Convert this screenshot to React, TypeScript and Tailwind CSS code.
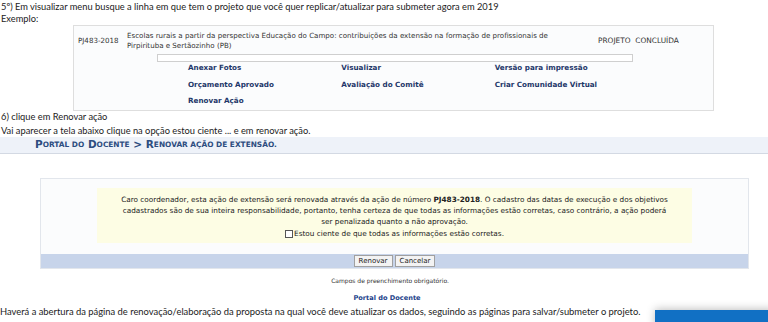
const links = [
  ['Anexar Fotos', 'Visualizar', 'Versão para impressão'],
  ['Orçamento Aprovado', 'Avaliação do Comitê', 'Criar Comunidade Virtual'],
  ['Renovar Ação', '', ''],
]

export default function App() {
  return (
    <div className="relative h-[322px] w-[768px] overflow-hidden bg-white text-[#222] [font-family:Lato,sans-serif]">
      <p className="pl-px pt-px text-[9.3px] leading-[12px]">
        5º) Em visualizar menu busque a linha em que tem o projeto que você quer replicar/atualizar para submeter agora em 2019
      </p>
      <p className="pl-px text-[9.3px] leading-[12px]">Exemplo:</p>

      {/* exemplo da linha do projeto */}
      <div className="ml-[73px] h-[86px] w-[641px] border border-[#dedede] bg-[#fbfcfd] pt-[5px] text-[7.1px] leading-[10px] [font-family:'DejaVu_Sans',sans-serif]">
        <div className="flex text-[#333]">
          <span className="ml-[4px] mt-[5px] w-[49px]">PJ483-2018</span>
          <span className="w-[445px]">
            Escolas rurais a partir da perspectiva Educação do Campo: contribuições da extensão na formação de profissionais de Pirpirituba e Sertãozinho (PB)
          </span>
          <span className="ml-[26px] mt-[5px] text-[7.4px]">PROJETO&nbsp;&nbsp;CONCLUÍDA</span>
        </div>
        <div className="ml-[83px] mt-[3px] h-[8px] w-[476px] border border-[#cfcfcf] bg-white" />
        <div className="ml-[114px] grid w-[460px] grid-cols-3 gap-y-[6.5px] pt-px text-[7.2px] font-bold text-[#1e3769]">
          {links.flat().map((l, i) => (
            <span key={i} className="h-[10px]">{l}</span>
          ))}
        </div>
      </div>

      <p className="pl-px text-[9.3px] leading-[12px]">6) clique em Renovar ação</p>
      <p className="pl-px pt-px text-[9.3px] leading-[13px]">Vai aparecer a tela abaixo clique na opção estou ciente ... e em renovar ação.</p>

      <div className="flex h-[17px] items-center border-b border-[#d3d9e3] bg-[#eef2f9] pl-[35px] font-bold text-[#2d4d80] [font-family:'DejaVu_Sans',sans-serif]">
        <span className="text-[10.5px]">P</span>
        <span className="text-[7.4px]">ORTAL DO </span>
        <span className="text-[10.5px]">&nbsp;D</span>
        <span className="text-[7.4px]">OCENTE</span>
        <span className="text-[10.5px]">&nbsp;&gt; R</span>
        <span className="text-[7.4px]">ENOVAR AÇÃO DE EXTENSÃO.</span>
      </div>

      {/* formulario de renovacao */}
      <div className="ml-[40px] mt-[24px] w-[709px] border border-[#e2e6ec] bg-[#fbfcfd] text-[7.3px] [font-family:'DejaVu_Sans',sans-serif]">
        <div className="mx-[56px] mb-[11px] mt-[9px] h-[55px] bg-[#fdfde4] px-[8px] pt-[6px] text-center leading-[11px] text-[#222]">
          <p>
            Caro coordenador, esta ação de extensão será renovada através da ação de número <b>PJ483-2018</b>. O cadastro das datas de execução e dos objetivos
            <br />
            cadastrados são de sua inteira responsabilidade, portanto, tenha certeza de que todas as informações estão corretas, caso contrário, a ação poderá
            <br />
            ser penalizada quanto a não aprovação.
          </p>
          <label className="mt-px flex items-center justify-center">
            <span className="mr-px inline-block h-[8px] w-[8px] border border-[#555] bg-white" />
            Estou ciente de que todas as informações estão corretas.
          </label>
        </div>
        <div className="flex h-[14px] items-center justify-center gap-[2px] bg-[#c7d4ea]">
          <button className="h-[12px] border border-[#a0a0a0] bg-[#f3f3f3] px-[4px] text-[7px] leading-[10px] text-[#222]">Renovar</button>
          <button className="h-[12px] border border-[#a0a0a0] bg-[#f3f3f3] px-[4px] text-[7px] leading-[10px] text-[#222]">Cancelar</button>
        </div>
      </div>

      <p className="ml-[12px] mt-[7px] text-center text-[6px] leading-[10px] text-[#333] [font-family:'DejaVu_Sans',sans-serif]">Campos de preenchimento obrigatório.</p>
      <p className="ml-[6px] mt-[7px] text-center text-[6.6px] font-bold leading-[10px] text-[#22428a] [font-family:'DejaVu_Sans',sans-serif]">Portal do Docente</p>
      <p className="mt-[2px] text-[9.4px] leading-[14px]">
        Haverá a abertura da página de renovação/elaboração da proposta na qual você deve atualizar os dados, seguindo as páginas para salvar/submeter o projeto.
      </p>

      {/* toast no canto */}
      <div className="absolute left-[655px] top-[310px] h-[20px] w-[120px] bg-[#1170c4] shadow-[0_-1px_8px_rgba(0,0,0,0.25)]" />
    </div>
  )
}
